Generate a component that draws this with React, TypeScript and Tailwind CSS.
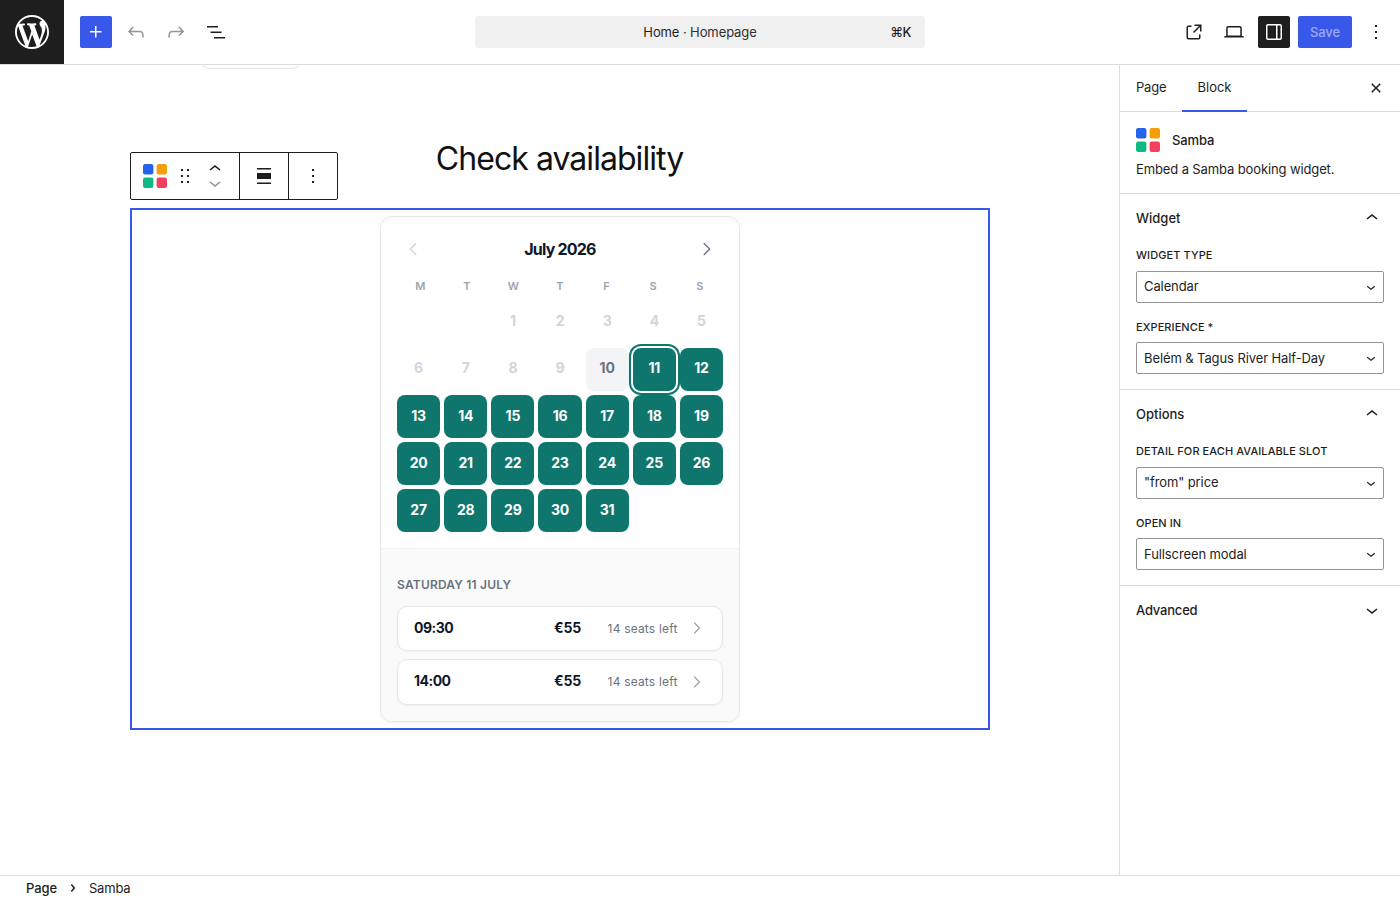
import React from 'react';

const ICONS = {
  wordpress:
    'M20 10c0-5.51-4.49-10-10-10C4.48 0 0 4.49 0 10c0 5.52 4.48 10 10 10 5.51 0 10-4.48 10-10zM7.78 15.37L4.37 6.22c.55-.02 1.17-.08 1.17-.08.5-.06.44-1.13-.06-1.11 0 0-1.45.11-2.37.11-.18 0-.37 0-.58-.01C4.12 2.69 6.87 1.11 10 1.11c2.33 0 4.45.87 6.05 2.34-.68-.11-1.65.39-1.65 1.58 0 .74.45 1.36.9 2.1.35.61.55 1.36.55 2.46 0 1.49-1.4 5-1.4 5l-3.03-8.37c.54-.02.82-.17.82-.17.5-.05.44-1.25-.06-1.22 0 0-1.44.12-2.38.12-.87 0-2.33-.12-2.33-.12-.5-.03-.56 1.2-.06 1.22l.92.08 1.26 3.41zM17.41 10c.24-.64.74-1.87.43-4.25.7 1.29 1.05 2.71 1.05 4.25 0 3.29-1.73 6.24-4.4 7.78.97-2.59 1.94-5.2 2.92-7.78zM6.1 18.09C3.12 16.65 1.11 13.53 1.11 10c0-1.3.23-2.48.72-3.59C3.25 10.3 4.67 14.2 6.1 18.09zm4.03-6.63l2.58 6.98c-.86.29-1.76.45-2.71.45-.79 0-1.57-.11-2.29-.33.81-2.38 1.62-4.74 2.42-7.1z',
  plus: 'M11 12.5V17.5H12.5V12.5H17.5V11H12.5V6H11V11H6V12.5H11Z',
  undo: 'M18.3 11.7c-.6-.6-1.4-.9-2.3-.9H6.7l2.9-3.3-1.1-1-4.5 5L8.5 16l1-1-2.7-2.7H16c.5 0 .9.2 1.3.5 1 1 1 3.4 1 4.5v.3h1.5v-.2c0-1.5 0-4.3-1.5-5.7z',
  redo: 'M15.6 6.5l-1.1 1 2.9 3.3H8c-.9 0-1.7.3-2.3.9-1.4 1.5-1.4 4.2-1.4 5.6v.2h1.5v-.3c0-1.1 0-3.5 1-4.5.3-.3.7-.5 1.3-.5h9.2L14.5 15l1.1 1.1 4.6-4.6-4.6-5z',
  listView: 'M3 6h11v1.5H3V6Zm3.5 5.5h11V13h-11v-1.5ZM21 17H10v1.5h11V17Z',
  external:
    'M19.5 4.5h-7V6h4.44l-5.97 5.97 1.06 1.06L18 7.06v4.44h1.5v-7Zm-13 1a2 2 0 0 0-2 2v10a2 2 0 0 0 2 2h10a2 2 0 0 0 2-2v-3H17v3a.5.5 0 0 1-.5.5h-10a.5.5 0 0 1-.5-.5v-10a.5.5 0 0 1 .5-.5h3V5.5h-3Z',
  desktop:
    'M20.5 16h-.7V8c0-1.1-.9-2-2-2H6.2c-1.1 0-2 .9-2 2v8h-.7c-.8 0-1.5.7-1.5 1.5h20c0-.8-.7-1.5-1.5-1.5zM5.7 8c0-.3.2-.5.5-.5h11.6c.3 0 .5.2.5.5v7.6H5.7V8z',
  drawer:
    'M18 4H6c-1.1 0-2 .9-2 2v12c0 1.1.9 2 2 2h12c1.1 0 2-.9 2-2V6c0-1.1-.9-2-2-2zm-4 14.5H6c-.3 0-.5-.2-.5-.5V6c0-.3.2-.5.5-.5h8v13zm4.5-.5c0 .3-.2.5-.5.5h-2.5v-13H18c.3 0 .5.2.5.5v12z',
  more: 'M13 19h-2v-2h2v2zm0-6h-2v-2h2v2zm0-6h-2V5h2v2z',
  drag: 'M8 7h2V5H8v2zm0 6h2v-2H8v2zm0 6h2v-2H8v2zm6-14v2h2V5h-2zm0 8h2v-2h-2v2zm0 6h2v-2h-2v2z',
  up: 'M6.5 12.4L12 8l5.5 4.4-.9 1.2L12 10l-4.5 3.6-1-1.2z',
  down: 'M17.5 11.6L12 16l-5.5-4.4.9-1.2L12 14l4.5-3.6 1 1.2z',
  align: 'M19 5.5H5V4h14v1.5ZM19 20H5v-1.5h14V20ZM5 9h14v6H5V9Z',
  close:
    'M12 13.06l3.712 3.713 1.061-1.06L13.061 12l3.712-3.712-1.06-1.06L12 10.938 8.288 7.227l-1.061 1.06L10.939 12l-3.712 3.712 1.06 1.061L12 13.061z',
  crumb:
    'M10.8622 8.04053L14.2805 12.0286L10.8622 16.0167L9.72327 15.0405L12.3049 12.0286L9.72327 9.01672L10.8622 8.04053Z',
};

const Icon = ({ name, className = 'size-6' }: { name: keyof typeof ICONS; className?: string }) => (
  <svg viewBox={name === 'wordpress' ? '0 0 20 20' : '0 0 24 24'} fill="currentColor" className={`shrink-0 ${className}`}>
    <path d={ICONS[name]} />
  </svg>
);

const SambaLogo = () => (
  <svg viewBox="0 0 24 24" className="size-6 shrink-0">
    <rect x="0" y="0" width="10.4" height="10.4" rx="2.2" fill="#2563eb" />
    <rect x="13.6" y="0" width="10.4" height="10.4" rx="2.2" fill="#f59e0b" />
    <rect x="0" y="13.6" width="10.4" height="10.4" rx="2.2" fill="#10b981" />
    <rect x="13.6" y="13.6" width="10.4" height="10.4" rx="2.2" fill="#f43f5e" />
  </svg>
);

const Chevron = ({ dir, className }: { dir: 'left' | 'right'; className: string }) => (
  <svg viewBox="0 0 20 20" fill="none" stroke="currentColor" strokeWidth="1.4" strokeLinecap="round" strokeLinejoin="round" className={`shrink-0 ${className}`}>
    <path d={dir === 'left' ? 'M12.8 4.5L7.3 10l5.5 5.5' : 'M7.2 4.5L12.7 10l-5.5 5.5'} />
  </svg>
);

const TopBar = () => (
  <header className="flex h-[65px] shrink-0 border-b border-[#ddd] bg-white">
    <div className="flex size-16 items-center justify-center bg-[#1e1e1e] text-white">
      <Icon name="wordpress" className="size-[34px]" />
    </div>
    <div className="flex h-16 w-[411px] items-center gap-2 pl-4">
      <button className="flex size-8 items-center justify-center rounded-[2px] bg-[#3858e9] text-white">
        <Icon name="plus" />
      </button>
      <button className="flex size-8 items-center justify-center text-[#949494]"><Icon name="undo" /></button>
      <button className="flex size-8 items-center justify-center text-[#949494]"><Icon name="redo" /></button>
      <button className="flex size-8 items-center justify-center"><Icon name="listView" /></button>
    </div>
    <div className="mt-4 grid h-8 w-[450px] grid-cols-[1fr_auto_1fr] items-center rounded-[3px] bg-[#f0f0f0] px-3.5 pt-0.5">
      <span />
      <span className="tracking-[-0.1px]">Home · <span className="text-[#2f2f2f]">Homepage</span></span>
      <span className="text-right font-medium tracking-[-0.5px]">⌘K</span>
    </div>
    <div className="ml-auto flex h-16 items-center gap-2 pr-2">
      <button className="flex size-8 items-center justify-center"><Icon name="external" /></button>
      <button className="flex size-8 items-center justify-center"><Icon name="desktop" /></button>
      <button className="flex size-8 items-center justify-center rounded-[2px] bg-[#1e1e1e] text-white">
        <Icon name="drawer" />
      </button>
      <button className="h-8 w-[54px] rounded-[2px] bg-[#3858e9] pt-0.5 font-medium tracking-[-0.1px] text-[#9caaf4]">Save</button>
      <button className="flex size-8 items-center justify-center"><Icon name="more" /></button>
    </div>
  </header>
);

const BlockToolbar = () => (
  <div className="absolute top-[87px] left-[130px] flex h-12 w-[208px] divide-x divide-[#1e1e1e] rounded-[2px] border border-[#1e1e1e] bg-white">
    <div className="flex w-[109px] items-center pl-3">
      <SambaLogo />
      <Icon name="drag" className="ml-1.5 size-6" />
      <div className="ml-1.5 flex flex-col">
        <Icon name="up" className="-mb-2 size-6" />
        <Icon name="down" className="-mt-0.5 size-6 text-[#949494]" />
      </div>
    </div>
    <div className="flex w-[49px] items-center justify-center"><Icon name="align" /></div>
    <div className="flex flex-1 items-center justify-center"><Icon name="more" /></div>
  </div>
);

const WEEKDAYS = ['M', 'T', 'W', 'T', 'F', 'S', 'S'];
const DAYS = Array.from({ length: 31 }, (_, i) => i + 1);
const SLOTS = ['09:30', '14:00'];

const dayStyle = (day: number) => {
  if (day < 10) return 'text-[#d1d5db]';
  if (day === 10) return 'bg-[#f3f4f6] text-[#6b7280]';
  if (day === 11) return 'z-10 bg-[#0f766e] text-white ring-2 ring-[#0f766e] ring-offset-2 ring-offset-white';
  return 'bg-[#0f766e] text-white';
};

const Calendar = () => (
  <div className="h-[506px] w-[360px] overflow-hidden rounded-xl border border-[#e5e7eb] bg-white text-[#0f172a] shadow-[0_1px_2px_rgba(0,0,0,0.05)]">
    <div className="h-[331px] px-4 pt-4">
      <div className="flex h-8 items-center justify-between px-1.5">
        <Chevron dir="left" className="size-5 text-[#d1d5db]" />
        <span className="text-[16px] font-bold tracking-[-0.8px]">July 2026</span>
        <Chevron dir="right" className="size-5 text-[#6b7280]" />
      </div>
      <div className="mt-3 grid h-[18px] grid-cols-7 items-center text-center text-[11px] font-semibold text-[#9ca3af]">
        {WEEKDAYS.map((d, i) => (
          <span key={i}>{d}</span>
        ))}
      </div>
      <div className="mt-[5.6px] grid auto-rows-[43.14px] grid-cols-7 gap-1">
        {DAYS.map((day) => (
          <div
            key={day}
            className={`relative flex items-center justify-center rounded-lg pb-[2.6px] text-[14px] font-bold tracking-[-0.2px] ${day === 1 ? 'col-start-3' : ''} ${dayStyle(day)}`}
          >
            {day}
          </div>
        ))}
      </div>
    </div>
    <div className="h-[173px] border-t border-[#f0f1f3] bg-[#fafafa] px-4 pt-7">
      <div className="h-[28.5px] text-[12px] leading-4 font-semibold tracking-[0.2px] text-[#6b7280]">SATURDAY 11 JULY</div>
      <div className="flex flex-col gap-2">
        {SLOTS.map((time) => (
          <div key={time} className="flex h-[45.5px] items-center rounded-[10px] border border-[#e5e7eb] bg-white px-4 shadow-[0_1px_2px_rgba(0,0,0,0.05)]">
            <span className="w-[141px] pb-0.5 text-[14px] font-bold tracking-[-0.5px]">{time}</span>
            <span className="w-[54px] pb-0.5 text-[14px] font-bold tracking-[-0.1px]">€55</span>
            <span className="w-[81px] pt-px text-[12px] tracking-[0.18px] text-[#6b7280]">14 seats left</span>
            <Chevron dir="right" className="size-[18px] text-[#9ca3af]" />
          </div>
        ))}
      </div>
    </div>
  </div>
);

const Canvas = () => (
  <main className="relative flex-1 overflow-hidden bg-white">
    <div className="ml-[200px] h-1 w-[102px] overflow-hidden">
      <div className="-mt-7 h-8 rounded-[10px] border border-[#e5e7eb]" />
    </div>
    <h2 className="mt-[66px] h-[73px] text-center text-[32px] leading-[48px] font-normal tracking-[-0.95px] text-[#111]">Check availability</h2>
    <div className="ml-[130px] flex h-[522px] w-[860px] justify-center border-2 border-[#3858e9] pt-1.5">
      <Calendar />
    </div>
    <BlockToolbar />
  </main>
);

const Field = ({ label, value }: { label: string; value: string }) => (
  <div>
    <div className="h-6 pt-[0.2px] text-[11px] leading-4 font-medium tracking-[0.08px] uppercase">{label}</div>
    <div className="flex h-8 items-center justify-between rounded-[2px] border border-[#949494] pr-[3px] pl-[7px]">
      <span className="tracking-[-0.1px]">{value}</span>
      <Icon name="down" className="size-[18px]" />
    </div>
  </div>
);

const PANELS = [
  {
    title: 'Widget',
    fields: [
      { label: 'Widget type', value: 'Calendar' },
      { label: 'Experience *', value: 'Belém & Tagus River Half-Day' },
    ],
  },
  {
    title: 'Options',
    fields: [
      { label: 'Detail for each available slot', value: '"from" price' },
      { label: 'Open in', value: 'Fullscreen modal' },
    ],
  },
];

const Sidebar = () => (
  <aside className="flex w-[281px] shrink-0 flex-col border-l border-[#ddd] bg-white">
    <div className="flex h-[47px] border-b border-[#ddd]">
      <div className="flex w-[62px] items-center pl-4 tracking-[-0.2px]">Page</div>
      <div className="-mb-px flex w-[65px] items-center justify-center border-b-2 border-[#3858e9]">Block</div>
      <div className="mr-3 ml-auto flex items-center"><Icon name="close" /></div>
    </div>
    <div className="h-[82px] border-b border-[#ddd] px-4 pt-4">
      <div className="flex items-center gap-3">
        <SambaLogo />
        <span className="pt-0.5 font-medium tracking-[-0.1px]">Samba</span>
      </div>
      <p className="mt-[7px] leading-5 tracking-[-0.12px]">Embed a Samba booking widget.</p>
    </div>
    {PANELS.map(({ title, fields }) => (
      <section key={title} className="h-[196px] border-b border-[#ddd] px-4">
        <div className="flex h-[53px] items-center justify-between pb-1">
          <span className="font-medium">{title}</span>
          <Icon name="up" className="mb-0.5 size-6" />
        </div>
        <div className="flex flex-col gap-[15.4px]">
          {fields.map((f) => (
            <Field key={f.label} {...f} />
          ))}
        </div>
      </section>
    ))}
    <div className="flex h-12 items-center justify-between px-4">
      <span className="pt-0.5 font-medium tracking-[-0.2px]">Advanced</span>
      <Icon name="down" />
    </div>
  </aside>
);

export default function App() {
  return (
    <div className="flex h-[900px] w-[1400px] flex-col overflow-hidden bg-white font-['Inter',sans-serif] text-[13px] text-[#1e1e1e]">
      <TopBar />
      <div className="flex min-h-0 flex-1">
        <Canvas />
        <Sidebar />
      </div>
      <footer className="flex h-[25px] shrink-0 items-center border-t border-[#ddd] pl-[26px]">
        <span className="pt-0.5 font-medium tracking-[-0.1px]">Page</span>
        <Icon name="crumb" className="mx-1 size-6" />
        <span className="pt-0.5 tracking-[-0.2px]">Samba</span>
      </footer>
    </div>
  );
}
